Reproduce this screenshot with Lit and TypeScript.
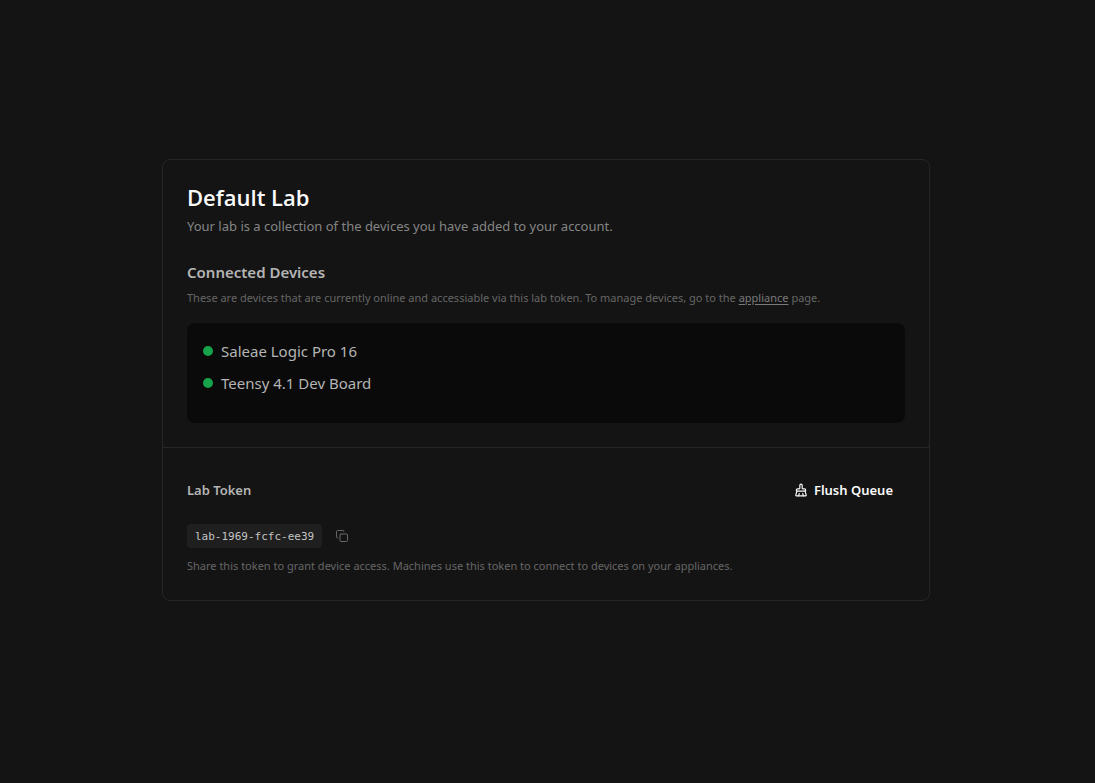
import { LitElement, html, css } from "lit";
import { customElement, property, state } from "lit/decorators.js";

interface Device {
  name: string;
  online: boolean;
}

@customElement("device-list")
export class DeviceList extends LitElement {
  @property({ attribute: false }) devices: Device[] = [];

  static styles = css`
    :host {
      display: block;
    }
    .list {
      box-sizing: border-box;
      min-height: 100px;
      margin: 0;
      padding: 16px;
      list-style: none;
      display: flex;
      flex-direction: column;
      gap: 8px;
      border-radius: 8px;
      background: #0a0a0a;
    }
    .device {
      display: flex;
      align-items: center;
      gap: 8px;
      font-size: 15px;
      line-height: 24px;
      color: #b5b5b5;
    }
    .dot {
      width: 10px;
      height: 10px;
      border-radius: 50%;
      background: #525252;
    }
    .online {
      background: #16a34a;
    }
  `;

  render() {
    return html`
      <ul class="list">
        ${this.devices.map(
          (d) => html`<li class="device">
            <span class="dot ${d.online ? "online" : ""}"></span>${d.name}
          </li>`
        )}
      </ul>
    `;
  }
}

@customElement("app-root")
export class AppRoot extends LitElement {
  @state() private devices: Device[] = [
    { name: "Saleae Logic Pro 16", online: true },
    { name: "Teensy 4.1 Dev Board", online: true },
  ];
  @state() private token = "lab-1969-fcfc-ee39";

  static styles = css`
    :host {
      box-sizing: border-box;
      min-height: 100vh;
      padding: 0 27px 23px 24px;
      display: flex;
      align-items: center;
      justify-content: center;
      background: #141414;
      font-family: "Segoe UI", "Noto Sans", sans-serif;
      font-size: 13px;
      line-height: 20px;
      color: #b5b5b5;
    }
    .card {
      box-sizing: border-box;
      width: 100%;
      max-width: 768px;
      border: 1px solid #262626;
      border-radius: 8px;
    }
    .section {
      padding: 24px;
    }
    .section + .section {
      border-top: 1px solid #262626;
    }
    h1,
    h2,
    p {
      margin: 0;
    }
    .title {
      font-family: "Segoe UI", "Open Sans", sans-serif;
      font-size: 22px;
      line-height: 26px;
      font-weight: 600;
      color: #fafafa;
    }
    .subtitle {
      margin-top: 6px;
      color: #858585;
    }
    .heading {
      margin-top: 24px;
      font-size: 15px;
      line-height: 24px;
      font-weight: 600;
    }
    .note {
      margin-top: 4px;
      font-size: 11px;
      color: #666666;
    }
    .note a {
      color: #7a7a7a;
      text-underline-offset: 2px;
    }
    .devices {
      margin-top: 15px;
    }
    .row {
      display: flex;
      align-items: center;
      justify-content: space-between;
    }
    .label {
      font-size: 13px;
      line-height: 20px;
      font-weight: 600;
    }
    button {
      display: flex;
      align-items: center;
      border: 0;
      background: transparent;
      font-family: inherit;
      cursor: pointer;
    }
    .flush {
      height: 36px;
      padding: 0 12px;
      gap: 6px;
      border-radius: 6px;
      font-size: 13px;
      font-weight: 600;
      color: #fafafa;
    }
    .token-row {
      margin-top: 16px;
      display: flex;
      align-items: center;
      gap: 8px;
    }
    .token {
      padding: 5px 8px 3px;
      border-radius: 4px;
      background: #1f1f1f;
      font-family: "DejaVu Sans Mono", monospace;
      font-size: 11px;
      line-height: 16px;
      color: #c4c4c4;
    }
    .copy {
      height: 24px;
      padding: 0 6px;
      border-radius: 4px;
      color: #666666;
    }
    .copy svg {
      width: 12px;
      height: 12px;
    }
    .share {
      margin-top: 8px;
    }
    svg {
      width: 14px;
      height: 14px;
      fill: none;
      stroke: currentColor;
      stroke-width: 2;
      stroke-linecap: round;
      stroke-linejoin: round;
    }
  `;

  private copyToken() {
    navigator.clipboard?.writeText(this.token);
  }

  render() {
    return html`
      <main class="card">
        <section class="section">
          <h1 class="title">Default Lab</h1>
          <p class="subtitle">Your lab is a collection of the devices you have added to your account.</p>
          <h2 class="heading">Connected Devices</h2>
          <p class="note">
            These are devices that are currently online and accessiable via this lab token. To manage devices, go to the
            <a href="#appliance">appliance</a> page.
          </p>
          <device-list class="devices" .devices=${this.devices}></device-list>
        </section>
        <section class="section">
          <div class="row">
            <h2 class="label">Lab Token</h2>
            <button class="flush" type="button">
              <svg viewBox="0 0 24 24" aria-hidden="true">
                <path d="m16 22-1-4" />
                <path
                  d="M19 14a1 1 0 0 0 1-1v-1a2 2 0 0 0-2-2h-3a1 1 0 0 1-1-1V4a2 2 0 0 0-4 0v5a1 1 0 0 1-1 1H6a2 2 0 0 0-2 2v1a1 1 0 0 0 1 1"
                />
                <path d="M19 14H5l-1.973 6.767A1 1 0 0 0 4 22h16a1 1 0 0 0 .973-1.233z" />
                <path d="m8 22 1-4" />
              </svg>
              Flush Queue
            </button>
          </div>
          <div class="token-row">
            <code class="token">${this.token}</code>
            <button class="copy" type="button" aria-label="Copy token" @click=${this.copyToken}>
              <svg viewBox="0 0 24 24" aria-hidden="true">
                <rect width="15" height="15" x="8" y="8" rx="2" ry="2" />
                <path d="M4 16c-1.7 0-3-.9-3-2V3c0-1.1.9-2 2-2h11c1.1 0 2 .9 2 2" />
              </svg>
            </button>
          </div>
          <p class="note share">
            Share this token to grant device access. Machines use this token to connect to devices on your appliances.
          </p>
        </section>
      </main>
    `;
  }
}
